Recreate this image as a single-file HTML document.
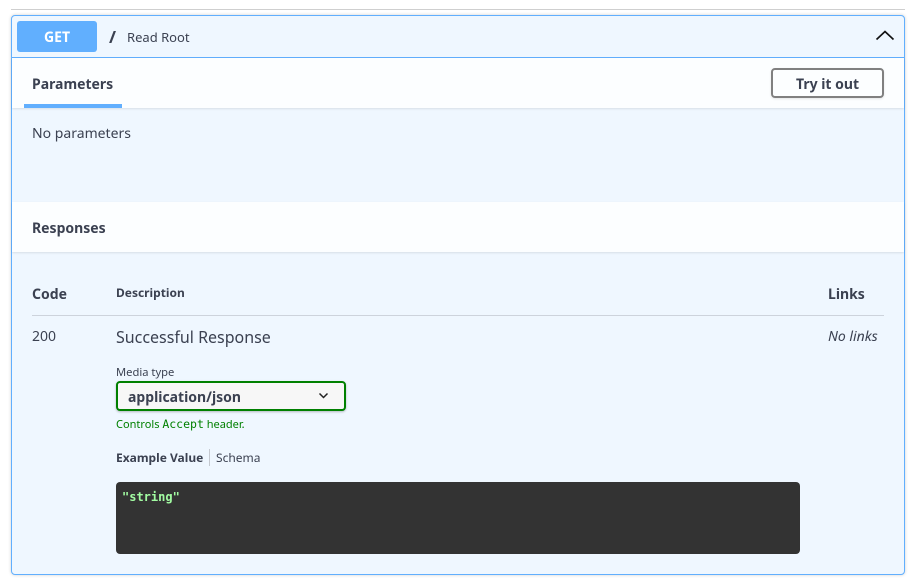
<!DOCTYPE html>
<html><head><meta charset="utf-8"><style>
html,body{margin:0;padding:0;background:#fff;width:918px;height:583px;overflow:hidden}
body{position:relative;font-family:"Noto Sans","Open Sans","DejaVu Sans","Liberation Sans",sans-serif;color:#3b4151}
div,span.a{position:absolute;box-sizing:border-box}
.t{white-space:nowrap;line-height:20px}
.b{font-weight:700}
</style></head><body>
<div style="left:11px;top:9px;width:894px;height:1px;background:#cfcfcf"></div>
<div style="left:11px;top:15px;width:894px;height:560px;background:#eff7ff;border:1px solid #61affe;border-radius:4px;box-shadow:0 0 3px rgba(0,0,0,.19)"></div>
<div style="left:12px;top:57px;width:892px;height:1px;background:#61affe"></div>
<div class="t b" style="left:17px;top:21px;width:80px;height:31px;background:#61affe;border-radius:3px;color:#fff;font-size:14px;line-height:33px;text-align:center">GET</div>
<div class="t b" style="left:109px;top:27px;font-size:17px">/</div>
<div class="t" style="left:127px;top:27px;font-size:13px">Read Root</div>
<svg style="position:absolute;left:874px;top:26px" width="22" height="18" viewBox="0 0 22 18"><path d="M2.5 13.5 L11 5.5 L19.5 13.5" fill="none" stroke="#111" stroke-width="1.7"/></svg>
<div style="left:12px;top:58px;width:892px;height:50px;background:rgba(255,255,255,.8);box-shadow:0 1px 2px rgba(0,0,0,.1)"></div>
<div class="t b" style="left:32px;top:75px;font-size:14px">Parameters</div>
<div style="left:24px;top:104px;width:98px;height:4px;background:#61affe"></div>
<div class="t b" style="left:771px;top:68px;width:113px;height:30px;border:2px solid #808080;border-radius:4px;font-size:14px;line-height:29px;text-align:center;box-shadow:0 1px 2px rgba(0,0,0,.1)">Try it out</div>
<div class="t" style="left:32px;top:124px;font-size:14px">No parameters</div>
<div style="left:12px;top:202px;width:892px;height:50px;background:rgba(255,255,255,.8);box-shadow:0 1px 2px rgba(0,0,0,.1)"></div>
<div class="t b" style="left:32px;top:219px;font-size:14px">Responses</div>
<div class="t b" style="left:32px;top:285px;font-size:14px">Code</div>
<div class="t b" style="left:116px;top:283px;font-size:12px">Description</div>
<div class="t b" style="left:828px;top:285px;font-size:14px">Links</div>
<div style="left:32px;top:315px;width:852px;height:1px;background:#cdd3dc"></div>
<div class="t" style="left:32px;top:327px;font-size:14px">200</div>
<div class="t" style="left:116px;top:327px;font-size:16px">Successful Response</div>
<div class="t" style="left:828px;top:327px;font-size:14px;font-style:italic">No links</div>
<div class="t" style="left:116px;top:363px;font-size:11.2px">Media type</div>
<div class="t b" style="left:116px;top:381px;width:230px;height:30px;background:#f7f7f7;border:2px solid #008000;border-radius:4px;font-size:14px;line-height:29px;padding-left:10px;box-shadow:0 1px 2px rgba(0,0,0,.25)">application/json</div>
<svg style="position:absolute;left:318px;top:391px" width="12" height="10" viewBox="0 0 12 10"><path d="M1.5 2.5 L5.5 6.5 L9.5 2.5" fill="none" stroke="#222" stroke-width="1.5"/></svg>
<div class="t" style="left:116px;top:414px;font-size:11px;color:#008000">Controls <span style="font-family:'DejaVu Sans Mono','Liberation Mono',monospace;font-size:11.5px">Accept</span> header.</div>
<div class="t b" style="left:116px;top:448px;font-size:12px">Example Value</div>
<div style="left:209px;top:449px;width:1px;height:17px;background:#c5c9d0"></div>
<div class="t" style="left:216px;top:448px;font-size:12px">Schema</div>
<div style="left:116px;top:482px;width:684px;height:72px;background:#333;border-radius:4px"></div>
<div class="t b" style="left:122px;top:487px;font-family:'DejaVu Sans Mono','Liberation Mono',monospace;font-size:12px;color:#a2fca2;line-height:20px">"string"</div>
</body></html>
